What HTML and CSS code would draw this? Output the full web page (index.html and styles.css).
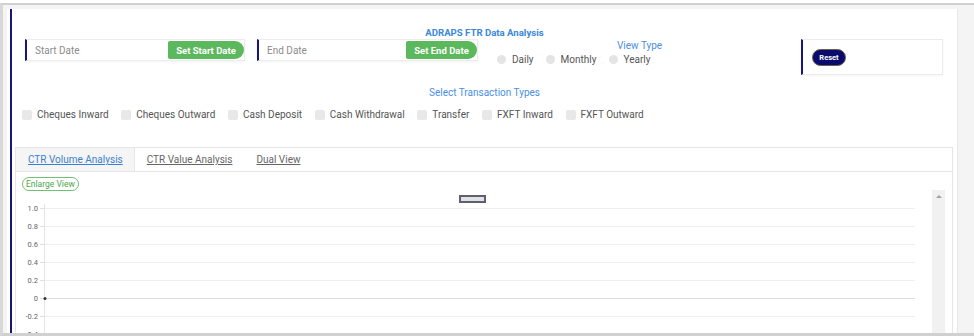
FILE: index.html
```html
<!DOCTYPE html>
<html lang="en">
<head>
	<meta charset="UTF-8">
	<title>ADRAPS FTR Data Analysis</title>
	<link rel="stylesheet" href="styles.css">
</head>
<body>
<div class="frame">
	<div class="panel">
		<div class="content">
			<div class="title">ADRAPS FTR Data Analysis</div>
			<div class="controls">
				<div class="datebox start">
					<span class="placeholder">Start Date</span>
					<button type="button" class="setbtn">Set Start Date</button>
				</div>
				<div class="datebox end">
					<span class="placeholder">End Date</span>
					<button type="button" class="setbtn">Set End Date</button>
				</div>
				<div class="viewtype">
					<div class="vt-label">View Type</div>
					<div class="radios">
						<label class="radio"><span class="circle"></span>Daily</label>
						<label class="radio"><span class="circle"></span>Monthly</label>
						<label class="radio"><span class="circle"></span>Yearly</label>
					</div>
				</div>
				<div class="resetbox">
					<button type="button" class="reset">Reset</button>
				</div>
			</div>
			<div class="subtitle">Select Transaction Types</div>
			<div class="checks">
				<label class="check"><span class="box"></span>Cheques Inward</label>
				<label class="check"><span class="box"></span>Cheques Outward</label>
				<label class="check"><span class="box"></span>Cash Deposit</label>
				<label class="check"><span class="box"></span>Cash Withdrawal</label>
				<label class="check"><span class="box"></span>Transfer</label>
				<label class="check"><span class="box"></span>FXFT Inward</label>
				<label class="check"><span class="box"></span>FXFT Outward</label>
			</div>
			<div class="tabbox">
				<div class="tabs">
					<a class="tab active">CTR Volume Analysis</a>
					<a class="tab">CTR Value Analysis</a>
					<a class="tab">Dual View</a>
				</div>
				<div class="enlarge-row">
					<button type="button" class="enlarge">Enlarge View</button>
				</div>
				<div class="chartrow">
					<svg class="chart" width="916" height="170" viewBox="0 0 916 170">
						<rect x="444" y="6" width="25" height="6" fill="#dfe2ea" stroke="#606068" stroke-width="2"/>
						<g stroke="#efefef" stroke-width="1">
							<line x1="28" y1="18.5" x2="899" y2="18.5"/>
							<line x1="28" y1="36.5" x2="899" y2="36.5"/>
							<line x1="28" y1="54.5" x2="899" y2="54.5"/>
							<line x1="28" y1="72.5" x2="899" y2="72.5"/>
							<line x1="28" y1="90.5" x2="899" y2="90.5"/>
							<line x1="28" y1="126.5" x2="899" y2="126.5"/>
							<line x1="28" y1="144.5" x2="899" y2="144.5"/>
						</g>
						<line x1="28" y1="108.5" x2="899" y2="108.5" stroke="#dedede"/>
						<line x1="28.5" y1="14" x2="28.5" y2="170" stroke="#e4e4e4"/>
						<g stroke="#e0e0e0">
							<line x1="24" y1="18.5" x2="28" y2="18.5"/>
							<line x1="24" y1="36.5" x2="28" y2="36.5"/>
							<line x1="24" y1="54.5" x2="28" y2="54.5"/>
							<line x1="24" y1="72.5" x2="28" y2="72.5"/>
							<line x1="24" y1="90.5" x2="28" y2="90.5"/>
							<line x1="24" y1="108.5" x2="28" y2="108.5"/>
							<line x1="24" y1="126.5" x2="28" y2="126.5"/>
							<line x1="24" y1="144.5" x2="28" y2="144.5"/>
						</g>
						<g class="ylabels" text-anchor="end">
							<text x="22" y="21.3">1.0</text>
							<text x="22" y="39.3">0.8</text>
							<text x="22" y="57.3">0.6</text>
							<text x="22" y="75.3">0.4</text>
							<text x="22" y="93.3">0.2</text>
							<text x="22" y="111.3">0</text>
							<text x="22" y="129.3">-0.2</text>
							<text x="22" y="147.3">-0.4</text>
						</g>
						<circle cx="29" cy="108.5" r="1.5" fill="#333"/>
					</svg>
					<div class="scrollbar"><span class="arrow"></span></div>
				</div>
			</div>
		</div>
	</div>
</div>
</body>
</html>
```

FILE: styles.css
```css
html, body {
	margin: 0;
	overflow: hidden;
}
body {
	background: #fff;
	padding-top: 3px;
	font-family: Roboto, "Liberation Sans", sans-serif;
}
button {
	font-family: Roboto, "Liberation Sans", sans-serif;
	cursor: pointer;
}

/* outer grey frame */
.frame {
	box-sizing: border-box;
	width: 974px;
	height: 333px;
	overflow: hidden;
	background: #f4f4f4;
	border-top: 2px solid #d0d0d0;
	border-bottom: 3px solid #d0d0d0;
	border-left: 3px solid #d8d8d8;
	padding: 4px 16px 0 4px;
}
.panel {
	background: #fff;
	border-right: 1px solid #e8e8e8;
	padding-left: 3px;
}
.content {
	border-left: 2px solid #15157a;
	padding-top: 18px;
}

.title {
	text-align: center;
	font-size: 9.6px;
	font-weight: bold;
	line-height: 12px;
	color: #3a88db;
}

/* top controls */
.controls {
	display: flex;
	align-items: flex-start;
	padding: 0 14px 0 13px;
}
.datebox {
	box-sizing: border-box;
	display: flex;
	align-items: center;
	justify-content: space-between;
	height: 22px;
	width: 220px;
	border: 1px solid #ececec;
	border-left: 2px solid #15157a;
	box-shadow: 0 1px 2px rgba(0,0,0,.05);
}
.datebox.end {
	width: 221px;
	margin-left: 12px;
}
.placeholder {
	padding-left: 8px;
	font-size: 10px;
	color: #8c8c8c;
}
.setbtn {
	height: 18px;
	width: 76px;
	padding: 0;
	border: none;
	border-radius: 2px 10px 10px 2px;
	background: #5cb85c;
	color: #fff;
	font-size: 9.5px;
	font-weight: bold;
}
.datebox.end .setbtn {
	width: 71px;
}

.viewtype {
	margin-left: 19px;
}
.vt-label {
	padding-left: 120px;
	font-size: 10px;
	line-height: 13px;
	color: #4a90e2;
}
.radios {
	display: flex;
	margin-top: 1px;
	line-height: 13px;
	font-size: 10px;
	color: #555;
}
.radio {
	display: flex;
	align-items: center;
	margin-right: 12px;
}
.circle {
	width: 9px;
	height: 9px;
	border-radius: 50%;
	background: #e4e4e4;
	margin-right: 6px;
}

.resetbox {
	box-sizing: border-box;
	display: flex;
	align-items: center;
	margin-left: auto;
	width: 142px;
	height: 36px;
	border: 1px solid #ebebeb;
	border-left: 2px solid #15157a;
	padding-left: 9px;
	box-shadow: 0 1px 2px rgba(0,0,0,.04);
}
.reset {
	width: 34px;
	height: 17px;
	padding: 0;
	border: 1px solid #6e6048;
	border-radius: 9px;
	background: #0b0b6d;
	color: #fff;
	font-size: 7.5px;
	font-weight: bold;
}

/* transaction types */
.subtitle {
	margin-top: 12px;
	text-align: center;
	font-size: 10px;
	line-height: 12px;
	color: #4a90e2;
}
.checks {
	display: flex;
	margin-top: 10px;
	padding-left: 10px;
	font-size: 10px;
	line-height: 12px;
	color: #555;
}
.check {
	display: flex;
	align-items: center;
	margin-right: 12.7px;
}
.box {
	width: 10px;
	height: 10px;
	border-radius: 2px;
	background: #e8e8e8;
	margin-right: 5px;
}

/* tab panel */
.tabbox {
	margin: 26px 4px 0 3px;
	border: 1px solid #e6e6e6;
	border-bottom: none;
}
.tabs {
	display: flex;
	height: 23px;
	border-bottom: 1px solid #e6e6e6;
}
.tab {
	padding: 0 12px;
	line-height: 23px;
	font-size: 10px;
	color: #666;
	text-decoration: underline;
}
.tab.active {
	background: #f5f5f5;
	border-right: 1px solid #e6e6e6;
	padding: 0 11px 0 12px;
	color: #3a80d2;
}
.enlarge-row {
	padding: 5px 0 0 6px;
	height: 13px;
}
.enlarge {
	box-sizing: border-box;
	display: block;
	height: 14px;
	padding: 0 3px;
	border: 1px solid #6cc070;
	border-radius: 7px;
	background: #fff;
	color: #4ca64f;
	font-size: 8.5px;
	line-height: 12px;
}
.chartrow {
	display: flex;
	padding-right: 7px;
}
.chart {
	display: block;
}
.ylabels {
	font-family: Roboto, "Liberation Sans", sans-serif;
	font-size: 7.5px;
	fill: #666;
}
.scrollbar {
	width: 13px;
	height: 170px;
	background: #f1f1f1;
}
.arrow {
	display: block;
	width: 0;
	height: 0;
	margin: 5px auto 0;
	border-left: 3px solid transparent;
	border-right: 3px solid transparent;
	border-bottom: 3px solid #a3a3a3;
}
```
